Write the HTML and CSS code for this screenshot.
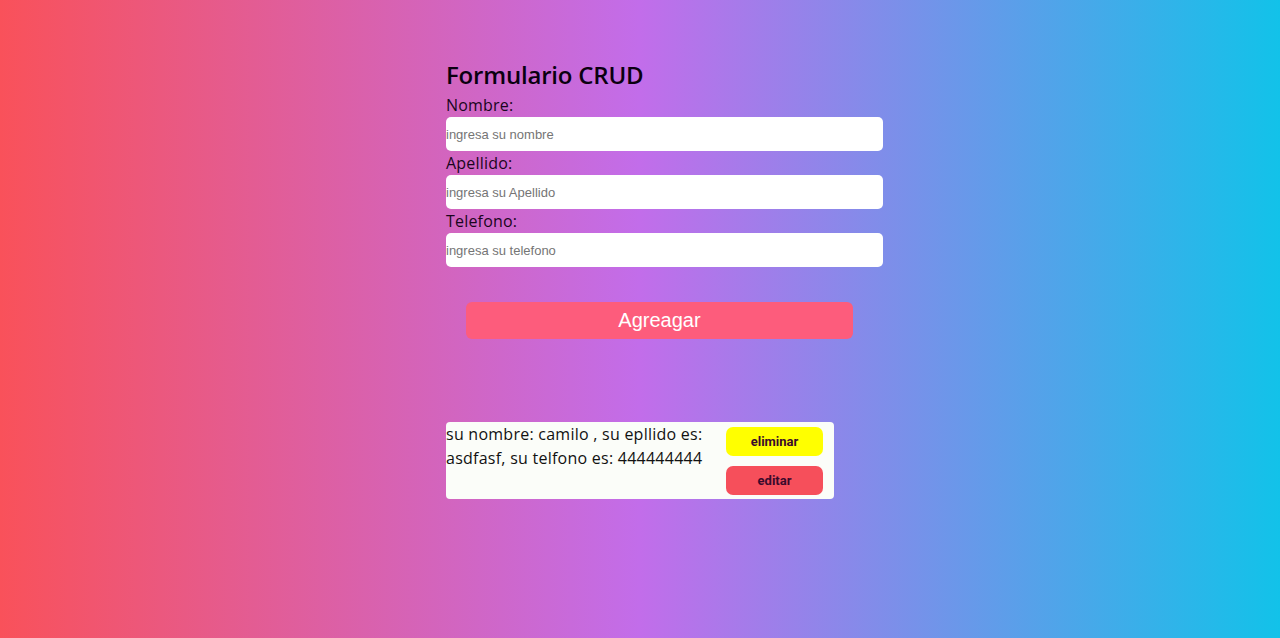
FILE: index.html
```html
<!DOCTYPE html>
<html lang="es">
<head>
<meta charset="utf-8">
<title>Formulario CRUD</title>
<link rel="stylesheet" href="styles.css">
</head>
<body>
<main class="app">
  <form class="form">
    <h1 class="title">Formulario CRUD</h1>
    <label class="label" for="nombre">Nombre:</label>
    <input class="field" id="nombre" type="text" placeholder="ingresa su nombre">
    <label class="label" for="apellido">Apellido:</label>
    <input class="field" id="apellido" type="text" placeholder="ingresa su Apellido">
    <label class="label" for="telefono">Telefono:</label>
    <input class="field" id="telefono" type="text" placeholder="ingresa su telefono">
    <button class="add" type="button">Agreagar</button>
  </form>
  <div class="card">
    <p class="card-text">su nombre: camilo , su epllido es: asdfasf, su telfono es: 444444444</p>
    <div class="actions">
      <button class="btn btn-delete" type="button">eliminar</button>
      <button class="btn btn-edit" type="button">editar</button>
    </div>
  </div>
</main>
</body>
</html>
```
FILE: styles.css
```css
* { box-sizing: border-box; }
html, body { height: 100%; }
body {
  margin: 0;
  background: linear-gradient(to right, #f9515a 0%, #c26dea 50%, #12c2e9 100%);
  font-family: "Open Sans", "Noto Sans", sans-serif;
  color: #111;
}
.app {
  width: 388px;
  margin: 0 auto;
  padding-top: 63px;
}
.form {
  display: flex;
  flex-direction: column;
  align-items: flex-start;
}
.title {
  margin: 0 0 6px;
  font-size: 24px;
  font-weight: 600;
  line-height: 24px;
  color: #0a0010;
  letter-spacing: -0.2px;
}
.label {
  font-size: 16px;
  line-height: 24px;
  color: #1a0520;
  letter-spacing: 0.2px;
}
.field {
  width: 437px;
  height: 34px;
  border: none;
  border-radius: 5px;
  background: #fff;
  padding: 0;
  font-family: "Liberation Sans", Arial, sans-serif;
  font-size: 13px;
  outline: none;
}
.field::placeholder { color: #757575; }
.add {
  margin: 35px 0 0 20px;
  width: 387px;
  height: 37px;
  border: none;
  border-radius: 6px;
  background: #fd5c7c;
  color: #fff;
  font-family: "Liberation Sans", Arial, sans-serif;
  font-size: 20px;
}
.card {
  margin-top: 83px;
  display: flex;
  align-items: flex-start;
  gap: 10px;
  background: #fbfdf9;
  border-radius: 4px;
  padding: 0 11px 0 0;
}
.card-text {
  margin: 0;
  flex: 1;
  font-size: 16px;
  line-height: 24px;
  color: #111;
  letter-spacing: 0.25px;
}
.actions {
  display: flex;
  flex-direction: column;
  gap: 10px;
  padding: 5px 0 4px;
}
.btn {
  width: 97px;
  height: 29px;
  border: none;
  border-radius: 7px;
  font-family: Roboto, "Liberation Sans", sans-serif;
  font-weight: 700;
  font-size: 13px;
  color: #3a0a2c;
}
.btn-delete { background: #ffff00; }
.btn-edit { background: #f64f5b; }
```
